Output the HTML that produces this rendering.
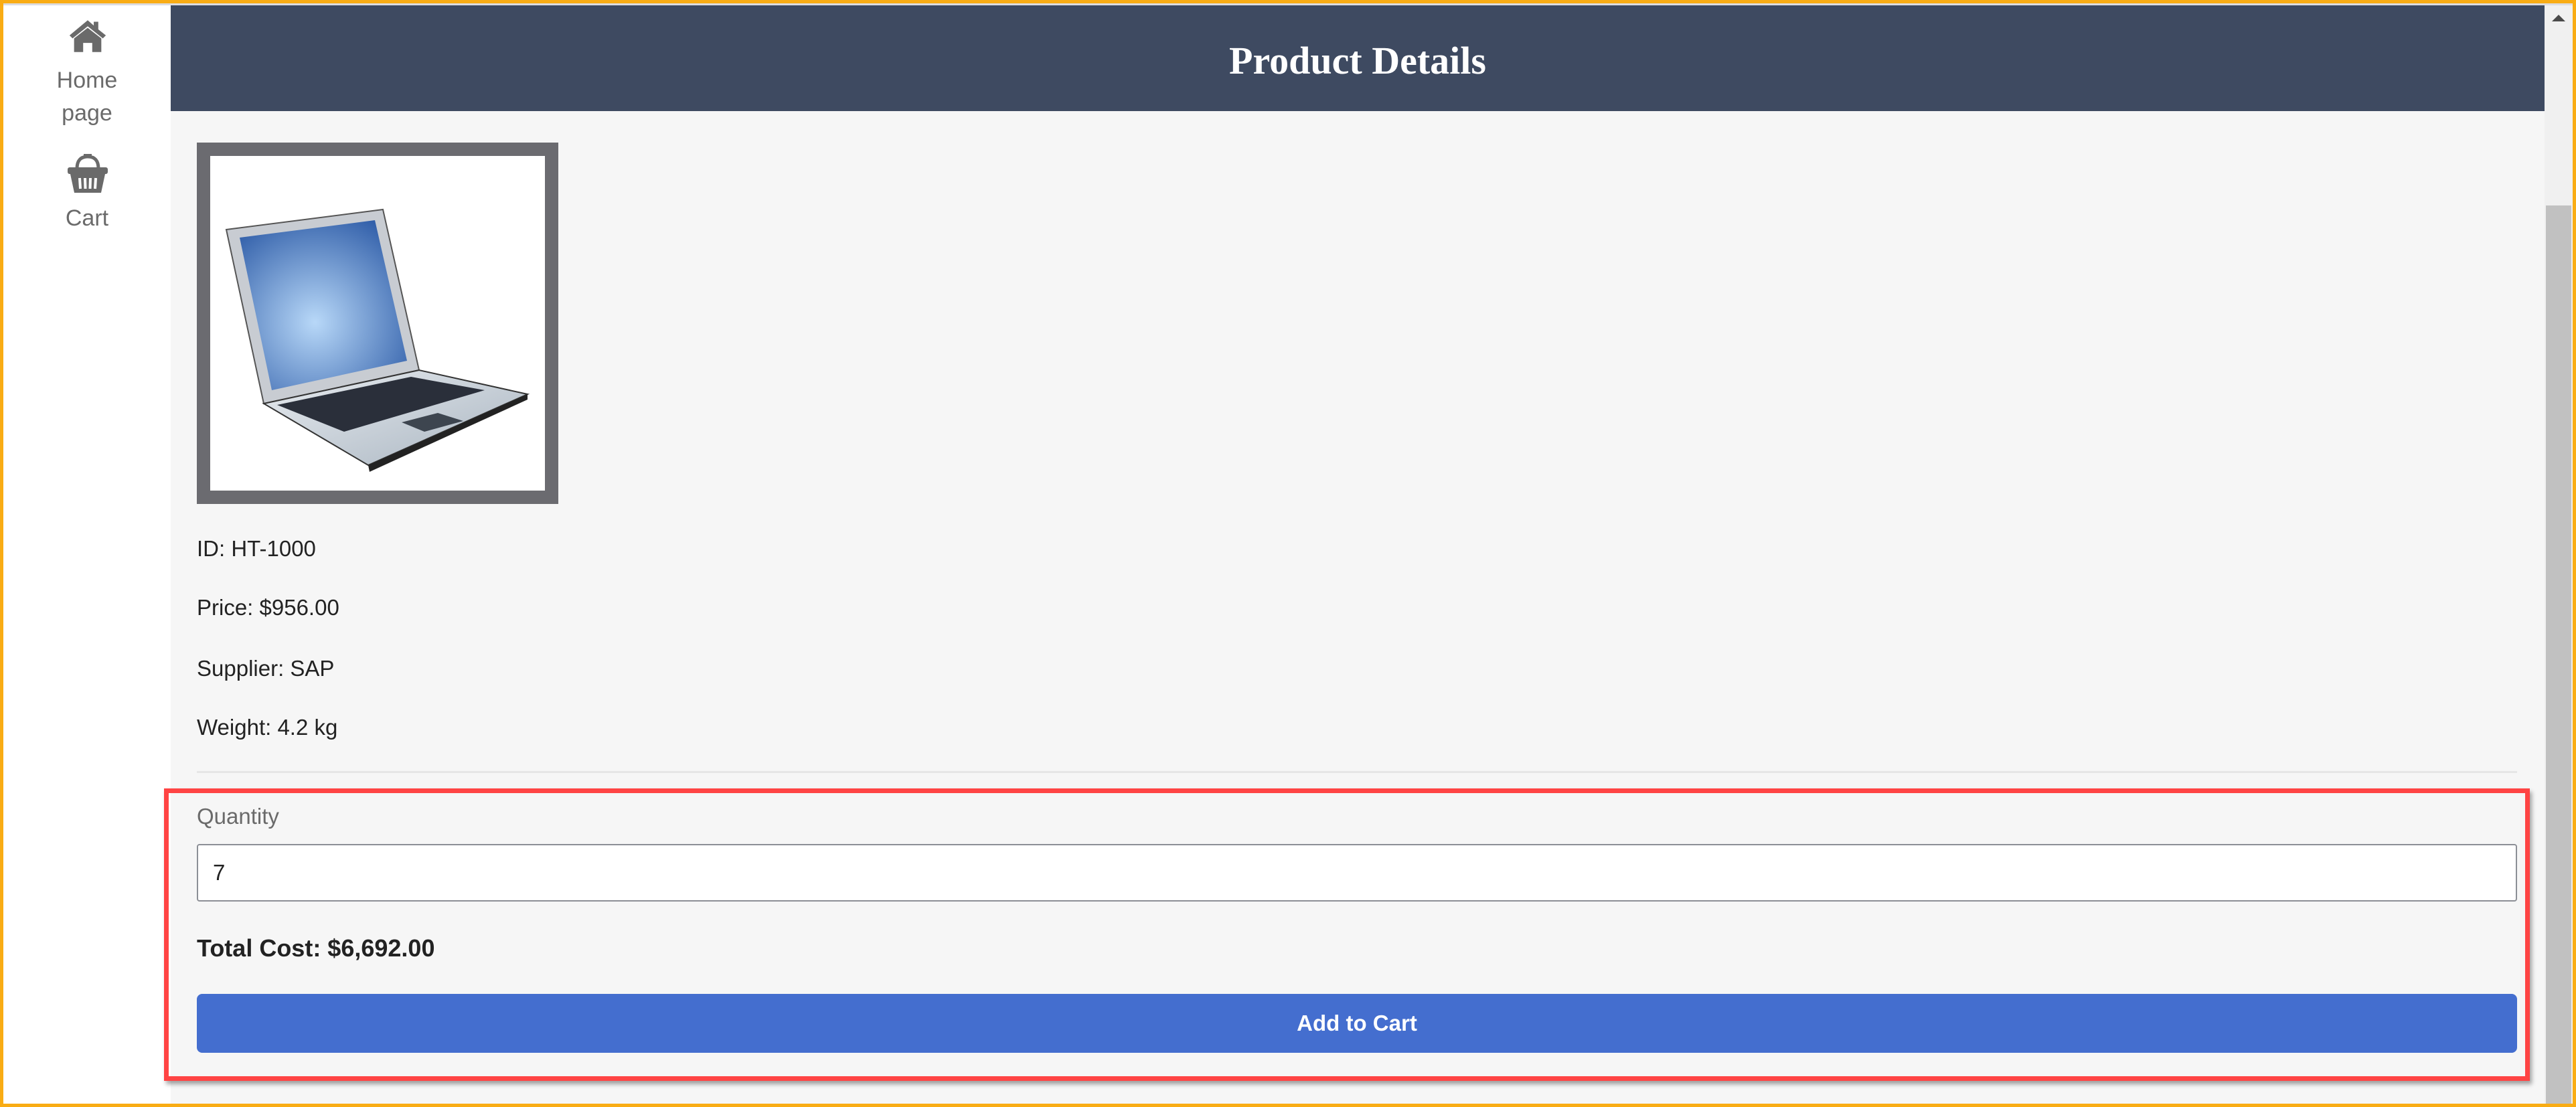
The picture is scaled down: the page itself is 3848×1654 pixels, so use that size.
<!DOCTYPE html>
<html><head><meta charset="utf-8"><style>
*{margin:0;padding:0;box-sizing:border-box}
html,body{width:3848px;height:1654px;overflow:hidden;background:#f6f6f6;font-family:"Liberation Sans",sans-serif}
.frame{position:absolute;inset:0;border:5px solid #f9ac14;pointer-events:none;z-index:10}
.topline{position:absolute;left:5px;right:5px;top:5px;height:3px;background:#dcdce0}
.side{position:absolute;left:5px;top:8px;width:250px;bottom:5px;background:#fff}
.side .lbl{position:absolute;left:0;width:250px;text-align:center;color:#6a6a6a;font-size:34px;line-height:48px}
.header{position:absolute;left:255px;top:8px;width:3546px;height:158px;background:#3e4a61;color:#fff;font-family:"Liberation Serif",serif;font-weight:bold;font-size:58px;text-align:center;line-height:166px}
.sb{position:absolute;left:3801px;top:8px;width:42px;bottom:5px;background:#f0f0f0}
.thumb{position:absolute;left:3803px;top:307px;width:38px;bottom:5px;background:#c1c1c1}
.arrow{position:absolute;left:3812px;top:22px;width:0;height:0;border-left:10px solid transparent;border-right:10px solid transparent;border-bottom:10px solid #4a4a4a}
.img{position:absolute;left:294px;top:213px;width:540px;height:540px;border:20px solid #6b6b70;background:#fff}
.t{position:absolute;left:294px;font-size:33px;color:#222;line-height:40px}
.hr{position:absolute;left:294px;width:3466px;top:1152px;height:3px;background:#e6e6e6}
.box{position:absolute;left:245px;top:1178px;width:3534px;height:437px;border:7px solid #ff4444;box-shadow:3px 5px 6px rgba(0,0,0,.35)}
.input{position:absolute;left:294px;top:1261px;width:3466px;height:86px;background:#fff;border:2px solid #8c8f96;border-radius:4px;font-size:33px;color:#222;padding-left:22px;line-height:82px}
.btn{position:absolute;left:294px;top:1485px;width:3466px;height:88px;background:#446ecf;border-radius:8px;color:#fff;font-weight:bold;font-size:33px;text-align:center;line-height:88px}
</style></head><body>
<div class="topline"></div>
<div class="side">
<svg style="position:absolute;left:96px;top:20px" width="60" height="52" viewBox="0 0 52 46"><path d="M26 2 L2 22 L6 26 L26 10 L46 26 L50 22 L40 14 L40 4 L34 4 L34 9 Z" fill="#6a6a6a"/><path d="M8 26 L26 12 L44 26 L44 44 L32 44 L32 32 L20 32 L20 44 L8 44 Z" fill="#6a6a6a"/></svg>
<div class="lbl" style="top:88px">Home</div>
<div class="lbl" style="top:137px">page</div>
<svg style="position:absolute;left:94px;top:220px" width="64" height="62" viewBox="0 0 64 62"><path d="M16 24 Q16 6 32 6 Q48 6 48 24" fill="none" stroke="#6a6a6a" stroke-width="5"/><rect x="26" y="2" width="12" height="6" fill="#6a6a6a"/><rect x="2" y="22" width="60" height="10" rx="3" fill="#6a6a6a"/><path d="M6 32 L58 32 L52 60 L12 60 Z" fill="#6a6a6a"/><g stroke="#fff" stroke-width="4"><line x1="20" y1="38" x2="21" y2="54"/><line x1="28" y1="38" x2="28.5" y2="54"/><line x1="36" y1="38" x2="35.5" y2="54"/><line x1="44" y1="38" x2="43" y2="54"/></g></svg>
<div class="lbl" style="top:294px">Cart</div>
</div>
<div class="header">Product Details</div>
<div class="sb"></div><div class="thumb"></div><div class="arrow"></div>
<div class="img">
<svg width="500" height="500" viewBox="0 0 500 500">
<defs><radialGradient id="g" cx="0.45" cy="0.6" r="0.7"><stop offset="0" stop-color="#b8d8f8"/><stop offset="1" stop-color="#2f5da8"/></radialGradient><linearGradient id="b" x1="0" y1="0" x2="1" y2="1"><stop offset="0" stop-color="#e8ecf0"/><stop offset="1" stop-color="#a8b4c0"/></linearGradient></defs>
<path d="M24 110 L258 80 L312 320 L80 370 Z" fill="#c8ccd2" stroke="#555" stroke-width="2"/>
<path d="M44 122 L246 96 L294 306 L92 350 Z" fill="url(#g)"/>
<path d="M80 370 L312 320 L474 356 L236 462 Z" fill="url(#b)" stroke="#333" stroke-width="2"/>
<path d="M100 372 L300 330 L410 350 L200 412 Z" fill="#2a2f3a"/>
<path d="M286 398 L340 384 L378 396 L320 412 Z" fill="#3d454f"/>
<path d="M236 462 L474 356 L474 364 L238 472 Z" fill="#222"/>
</svg></div>
<div class="t" style="top:800px">ID: HT-1000</div>
<div class="t" style="top:888px">Price: $956.00</div>
<div class="t" style="top:979px">Supplier: SAP</div>
<div class="t" style="top:1067px">Weight: 4.2 kg</div>
<div class="hr"></div>
<div class="box"></div>
<div class="t" style="top:1200px;color:#6a6a6a">Quantity</div>
<div class="input">7</div>
<div class="t" style="top:1397px;font-weight:bold;font-size:36px">Total Cost: $6,692.00</div>
<div class="btn">Add to Cart</div>
<div class="frame"></div>
</body></html>
